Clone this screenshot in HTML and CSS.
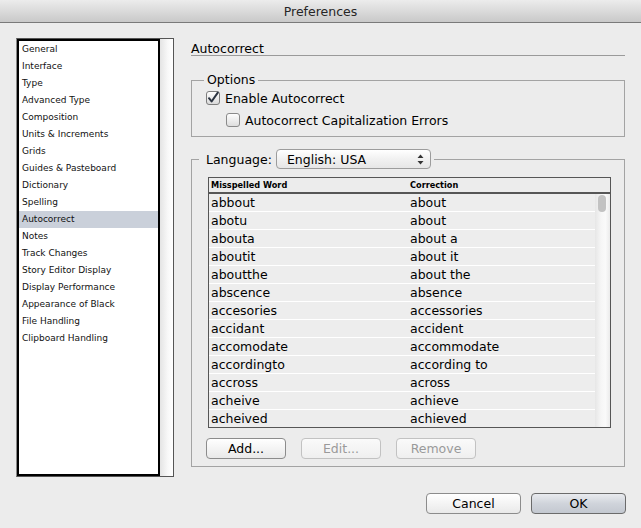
FILE: index.html
```html
<!DOCTYPE html>
<html>
<head>
<meta charset="utf-8">
<link rel="stylesheet" href="styles.css">
</head>
<body>
<div class="window">
  <div class="titlebar">Preferences</div>
  <div class="main">
    <div class="sidebar">
      <ul class="list">
        <li>General</li>
        <li>Interface</li>
        <li>Type</li>
        <li>Advanced Type</li>
        <li>Composition</li>
        <li>Units &amp; Increments</li>
        <li>Grids</li>
        <li>Guides &amp; Pasteboard</li>
        <li>Dictionary</li>
        <li>Spelling</li>
        <li class="sel">Autocorrect</li>
        <li>Notes</li>
        <li>Track Changes</li>
        <li>Story Editor Display</li>
        <li>Display Performance</li>
        <li>Appearance of Black</li>
        <li>File Handling</li>
        <li>Clipboard Handling</li>
      </ul>
      <div class="sbtrack"></div>
    </div>
    <div class="panel">
      <div class="heading">Autocorrect</div>
      <fieldset class="group options">
        <legend>Options</legend>
        <label class="check">
          <svg class="cb" width="14" height="14" viewBox="0 0 14 14">
            <defs><linearGradient id="g1" x1="0" y1="0" x2="0" y2="1"><stop offset="0" stop-color="#ffffff"/><stop offset="1" stop-color="#d8d8d8"/></linearGradient></defs>
            <rect x="0.5" y="0.5" width="13" height="13" rx="2.5" fill="url(#g1)" stroke="#7d7d7d"/>
            <path d="M3 7.2 L5.6 10.5 L11.8 1.6" fill="none" stroke="#2b3340" stroke-width="2" stroke-linecap="round" stroke-linejoin="round"/>
          </svg>
          <span>Enable Autocorrect</span>
        </label>
        <label class="check sub">
          <svg class="cb" width="14" height="14" viewBox="0 0 14 14">
            <defs><linearGradient id="g2" x1="0" y1="0" x2="0" y2="1"><stop offset="0" stop-color="#ffffff"/><stop offset="1" stop-color="#dcdcdc"/></linearGradient></defs>
            <rect x="0.5" y="0.5" width="13" height="13" rx="2.5" fill="url(#g2)" stroke="#8a8a8a"/>
          </svg>
          <span>Autocorrect Capitalization Errors</span>
        </label>
      </fieldset>
      <fieldset class="group lang">
        <legend><span class="langlabel">Language:</span><span class="popup"><span>English: USA</span><svg class="arrows" width="7" height="11" viewBox="0 0 7 11"><path d="M3.5 0.5 L6.5 4 L0.5 4 Z M3.5 10.5 L6.5 7 L0.5 7 Z" fill="#333"/></svg></span></legend>
        <div class="table">
          <div class="thead"><div class="c1">Misspelled Word</div><div class="c2">Correction</div></div>
          <div class="tbody">
            <div class="rows">
              <div class="row"><div class="c1">abbout</div><div class="c2">about</div></div>
              <div class="row"><div class="c1">abotu</div><div class="c2">about</div></div>
              <div class="row"><div class="c1">abouta</div><div class="c2">about a</div></div>
              <div class="row"><div class="c1">aboutit</div><div class="c2">about it</div></div>
              <div class="row"><div class="c1">aboutthe</div><div class="c2">about the</div></div>
              <div class="row"><div class="c1">abscence</div><div class="c2">absence</div></div>
              <div class="row"><div class="c1">accesories</div><div class="c2">accessories</div></div>
              <div class="row"><div class="c1">accidant</div><div class="c2">accident</div></div>
              <div class="row"><div class="c1">accomodate</div><div class="c2">accommodate</div></div>
              <div class="row"><div class="c1">accordingto</div><div class="c2">according to</div></div>
              <div class="row"><div class="c1">accross</div><div class="c2">across</div></div>
              <div class="row"><div class="c1">acheive</div><div class="c2">achieve</div></div>
              <div class="row"><div class="c1">acheived</div><div class="c2">achieved</div></div>
            </div>
            <div class="vscroll"><div class="thumb"></div></div>
          </div>
        </div>
        <div class="tablebtns">
          <div class="btn">Add...</div>
          <div class="btn disabled">Edit...</div>
          <div class="btn disabled">Remove</div>
        </div>
      </fieldset>
      <div class="footer">
        <div class="btn big">Cancel</div>
        <div class="btn big default">OK</div>
      </div>
    </div>
  </div>
</div>
</body>
</html>
```
FILE: styles.css
```css
* { box-sizing: border-box; }
html, body { margin: 0; padding: 0; }
body {
  width: 641px;
  height: 528px;
  background: #ececec;
  font-family: "DejaVu Sans", "Liberation Sans", sans-serif;
  color: #000;
  overflow: hidden;
}
.window { width: 641px; height: 528px; background: #ececec; }
.titlebar {
  height: 23px;
  line-height: 23px;
  text-align: center;
  font-size: 12.5px;
  color: #262626;
  background: linear-gradient(#ececec, #c9c9c9);
  border-bottom: 1px solid #7a7a7a;
}
.main { display: flex; padding: 15px 0 0 16px; }
.sidebar {
  width: 158px;
  height: 439px;
  display: flex;
  border: 1px solid #555;
  border-left-color: #888;
  background: #fff;
}
.list {
  list-style: none;
  margin: 0;
  padding: 0;
  flex: 1;
  border: 2px solid #000;
  background: #fff;
}
.list li {
  height: 17px;
  line-height: 16px;
  padding-left: 3px;
  font-size: 9px;
  color: #111;
  white-space: nowrap;
}
.list li.sel { background: #cad0da; }
.sbtrack { width: 13px; background: linear-gradient(90deg, #e4e4e4, #f8f8f8 60%, #ffffff); }
.panel { width: 434px; margin-left: 17px; display: flex; flex-direction: column; }
.heading {
  height: 18px;
  line-height: 17px;
  padding-top: 2px;
  font-size: 12.5px;
  border-bottom: 1px solid #9a9a9a;
}
.group {
  margin: 0;
  border: 1px solid #a3a3a3;
  border-radius: 0;
  min-width: 0;
}
.group legend { font-size: 12.5px; }
.options { margin-top: 16px; padding: 0 12px 6px 12px; }
.options legend { padding: 0 3px; line-height: 16px; }
.check { display: flex; align-items: center; height: 20px; font-size: 12.5px; margin-left: 2px; }
.check .cb { margin-right: 5px; flex: none; }
.check.sub { margin-left: 22px; margin-top: 2px; }
.lang { margin-top: 12px; padding: 0 13px 7px 16px; }
.lang legend { display: flex; align-items: center; padding: 0 3px 0 2px; height: 20px; margin-left: -9px; }
.langlabel { margin-left: 5px; margin-right: 4px; }
.popup {
  display: flex;
  align-items: center;
  justify-content: space-between;
  width: 155px;
  height: 20px;
  padding: 0 6px 0 10px;
  border: 1px solid #9c9c9c;
  border-radius: 4px;
  background: linear-gradient(#ffffff, #f1f1f1 50%, #e6e6e6);
}
.table { margin-top: 8px; border: 1px solid #565656; width: 403px; }
.thead { display: flex; height: 16px; line-height: 14px; font-size: 8.2px; font-weight: bold; border-bottom: 2px solid #565656; background: #ececec; }
.c1 { width: 201px; padding-left: 2px; white-space: nowrap; }
.c2 { flex: 1; white-space: nowrap; }
.tbody { display: flex; }
.rows { flex: 1; }
.row { display: flex; height: 18px; line-height: 18px; font-size: 12.5px; background: #ededed; border-bottom: 1px solid #fff; }
.row:last-child { border-bottom: none; height: 17px; }
.vscroll { width: 15px; background: linear-gradient(90deg, #e6e6e6, #f6f6f6 40%, #fafafa 70%, #ebebeb); padding: 1px 3px 0 3px; }
.thumb { height: 17px; width: 8px; border-radius: 4px; background: #c2c2c2; }
.tablebtns { display: flex; gap: 15px; margin-top: 10px; margin-left: -2px; }
.btn {
  width: 80px;
  height: 21px;
  line-height: 19px;
  text-align: center;
  font-size: 12.5px;
  border: 1px solid #8c8c8c;
  border-radius: 4px;
  background: linear-gradient(#ffffff, #f4f4f4 50%, #e9e9e9);
}
.btn.disabled { color: #9a9a9a; border-color: #c2c2c2; background: linear-gradient(#fafafa, #efefef); }
.footer { display: flex; justify-content: flex-end; gap: 10px; margin-top: 26px; margin-right: -1px; }
.btn.big { width: 95px; }
.btn.default { border-color: #6b6b6b; background: linear-gradient(#e9ebef, #d0d4db 50%, #c3c8d0); }
```
